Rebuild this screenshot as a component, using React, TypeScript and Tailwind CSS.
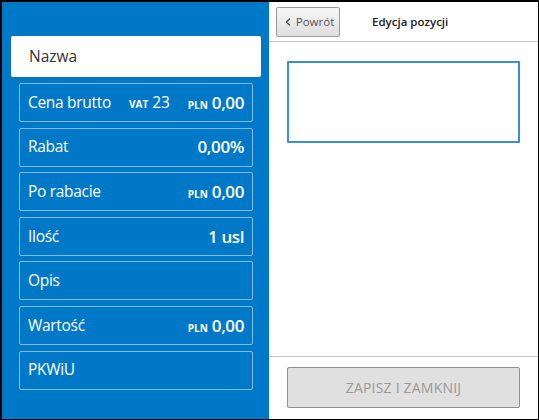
import { ChevronLeft } from 'lucide-react';

const font = { fontFamily: '"Open Sans", "Noto Sans", Arial, sans-serif' };

type Row = { label: string; vat?: string; cur?: string; value?: string };

const ROWS: Row[] = [
  { label: 'Cena brutto', vat: '23', cur: 'PLN', value: '0,00' },
  { label: 'Rabat', value: '0,00%' },
  { label: 'Po rabacie', cur: 'PLN', value: '0,00' },
  { label: 'Ilość', value: '1 usl' },
  { label: 'Opis' },
  { label: 'Wartość', cur: 'PLN', value: '0,00' },
  { label: 'PKWiU' },
];

function FieldRow({ row }: { row: Row }) {
  return (
    <div className="h-[39px] flex items-center px-[8px] border border-white/50 rounded-[2px] text-white">
      <span className="text-[15.5px] tracking-[-0.3px]">{row.label}</span>
      {row.vat && (
        <span className="ml-[18px] flex items-baseline gap-[4px]">
          <span className="text-[10px] font-bold">VAT</span>
          <span className="text-[15.5px]">{row.vat}</span>
        </span>
      )}
      <span className="ml-auto flex items-baseline gap-[4px]">
        {row.cur && <span className="text-[10px] font-bold">{row.cur}</span>}
        {row.value && <span className="text-[17px] font-semibold tracking-[-0.4px]">{row.value}</span>}
      </span>
    </div>
  );
}

export default function App() {
  return (
    <div className="w-[539px] h-[420px] flex bg-white border-black border-t-2 border-l-2 border-r border-b overflow-hidden" style={font}>
      <div className="w-[267px] shrink-0 bg-[#0078c8] pt-[34px] pl-[9px] pr-[8px]">
        <div className="h-[41px] bg-white rounded-[2px] flex items-center pl-[18px] text-[15.5px] text-[#333]">Nazwa</div>
        <div className="mt-[6px] mx-[8px] flex flex-col gap-[5.6px]">
          {ROWS.map(r => (
            <FieldRow key={r.label} row={r} />
          ))}
        </div>
      </div>

      <div className="flex-1 flex flex-col">
        <div className="h-[40px] shrink-0 border-b border-[#c4c4c4] flex items-center pl-[7px]">
          <button className="w-[64px] h-[30px] mt-[1px] flex items-center justify-center gap-[2px] rounded-[2px] border border-[#9a9a9a] bg-gradient-to-b from-[#f6f6f6] to-[#dedede] text-[11.5px] text-[#555]">
            <ChevronLeft size={12} strokeWidth={2.5} className="text-[#444]" />
            Powrót
          </button>
          <span className="ml-[32px] text-[11.5px] font-semibold text-[#222]">Edycja pozycji</span>
        </div>

        <div className="flex-1 px-[18px] pt-[19px]">
          <div className="h-[82px] border-2 border-[#3a8ed6] rounded-[1px]" />
        </div>

        <div className="h-[63px] shrink-0 border-t border-[#c4c4c4] px-[18px] pt-[10px]">
          <button className="w-full h-[41px] rounded-[2px] border border-[#8f8f8f] bg-[#e0e0e0] text-[14px] text-[#999] tracking-[0.2px]">
            ZAPISZ I ZAMKNIJ
          </button>
        </div>
      </div>
    </div>
  );
}
